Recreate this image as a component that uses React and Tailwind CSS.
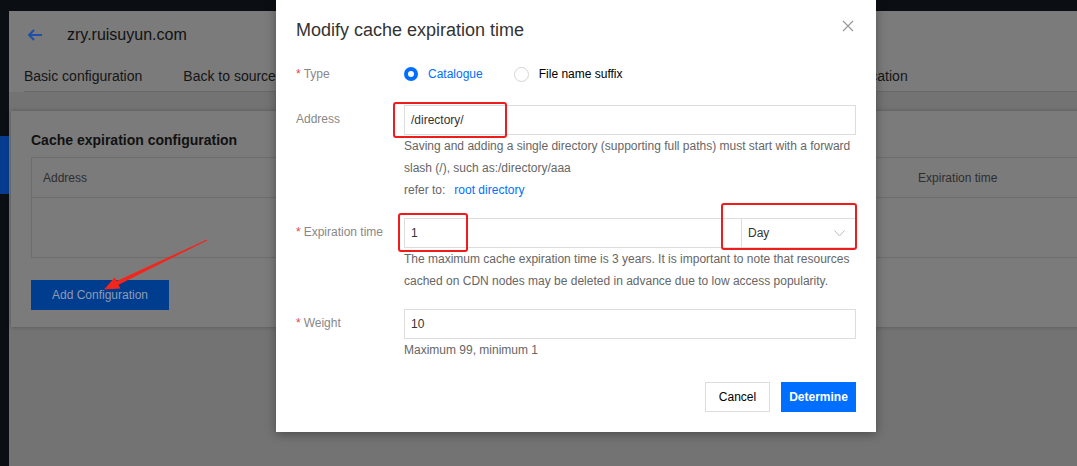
import React from 'react';

const tabs = ['Basic configuration', 'Back to source', 'Cache configuration', 'HTTPS configuration', 'Visit control', 'Access authentication'];

const HelpText = ({ children }) => (
    <div className="text-[12px] leading-[22px] text-[#666]">{children}</div>
);

const Label = ({ required, children }) => (
    <div className="w-[108px] shrink-0 text-[12px] leading-[29px] text-[#888]">
        {required && <span className="text-[#e54545] mr-[3px]">*</span>}
        {children}
    </div>
);

const Radio = ({ checked, label }) => (
    <div className="flex items-center gap-[10px]">
        {checked ? (
            <span className="w-[14px] h-[14px] rounded-full bg-[#006eff] flex items-center justify-center">
                <span className="w-[6px] h-[6px] rounded-full bg-white" />
            </span>
        ) : (
            <span className="w-[15px] h-[15px] rounded-full border border-[#d4d4d4] bg-white" />
        )}
        <span className={`text-[12px] ${checked ? 'text-[#006eff]' : 'text-black'}`}>{label}</span>
    </div>
);

const Background = () => (
    <div className="w-[1077px] h-[466px] bg-[#0b0f14] flex flex-col overflow-hidden">
        <div className="h-[11px] shrink-0" />
        <div className="flex flex-1">
            {/* sidebar edge */}
            <div className="w-[9px] shrink-0">
                <div className="mt-[125px] h-[58px] bg-[#063b8e]" />
            </div>

            <div className="flex-1 bg-[#737373] min-w-0">
                {/* page header */}
                <div className="bg-[#7b7b7b] h-[81px] pl-[15px] flex flex-col">
                    <div className="flex items-center h-[46px] pt-[2px]">
                        <svg width="16" height="12" viewBox="0 0 16 12" className="ml-[3px]" fill="none" stroke="#1f4fa8" strokeWidth="2">
                            <path d="M15 6H2M7 1 2 6l5 5" />
                        </svg>
                        <span className="ml-[24px] text-[16px] text-[#111]">zry.ruisuyun.com</span>
                    </div>
                    <div className="flex gap-[41px] border-b border-[#686868] h-[35px] items-center pt-[5px] whitespace-nowrap">
                        {tabs.map((t, i) => (
                            <span key={t} className={`text-[14px] text-[#151515] ${i === tabs.length - 1 ? 'ml-[5px]' : ''}`}>{t}</span>
                        ))}
                    </div>
                </div>

                {/* card */}
                <div className="mt-[19px] ml-[2px] w-[1120px] h-[216px] bg-[#7b7b7b] shadow-[0_0_4px_rgba(0,0,0,0.25)] pt-[21px] px-[20px]">
                    <div className="text-[14px] font-bold text-[#111] leading-[16px]">Cache expiration configuration</div>
                    <div className="mt-[9px] border border-[#6d6d6d]">
                        <div className="h-[40px] flex items-center border-b border-[#6d6d6d] text-[12px] text-[#2e2e2e]">
                            <span className="ml-[11px]">Address</span>
                            <span className="ml-[831px]">Expiration time</span>
                        </div>
                        <div className="h-[59px]" />
                    </div>
                    <button className="mt-[22px] w-[138px] h-[30px] bg-[#003d8f] text-[12px] text-[#8f9bb1]">
                        Add Configuration
                    </button>
                </div>
            </div>
        </div>
    </div>
);

const Modal = () => (
    <div className="absolute left-[276px] top-0 w-[600px] bg-white shadow-[0_2px_10px_rgba(0,0,0,0.35)] px-[20px] pt-[20px] pb-[20px]">
        <div className="flex items-center justify-between h-[20px]">
            <span className="text-[18px] text-[#333] leading-[20px]">Modify cache expiration time</span>
            <svg width="12" height="12" viewBox="0 0 12 12" className="mr-[2px] -mt-[8px]" stroke="#9a9a9a" strokeWidth="1.2">
                <path d="M1 1l10 10M11 1 1 11" />
            </svg>
        </div>

        {/* type */}
        <div className="mt-[24px] flex items-center h-[20px]">
            <div className="w-[108px] shrink-0 text-[12px] text-[#888]">
                <span className="text-[#e54545] mr-[3px]">*</span>Type
            </div>
            <div className="flex gap-[31px]">
                <Radio checked label="Catalogue" />
                <Radio label="File name suffix" />
            </div>
        </div>

        {/* address */}
        <div className="mt-[21px] flex">
            <Label>Address</Label>
            <div className="flex-1">
                <div className="h-[30px] border border-[#ddd] flex items-center px-[6px] text-[12px] text-[#333]">/directory/</div>
                <HelpText>Saving and adding a single directory (supporting full paths) must start with a forward</HelpText>
                <HelpText>slash (/), such as:/directory/aaa</HelpText>
                <HelpText>
                    refer to:<span className="text-[#006eff] ml-[9px]">root directory</span>
                </HelpText>
            </div>
        </div>

        {/* expiration */}
        <div className="mt-[17px] flex">
            <Label required>Expiration time</Label>
            <div className="flex-1">
                <div className="h-[30px] border border-[#ddd] flex text-[12px] text-[#333]">
                    <div className="flex-1 flex items-center px-[6px]">1</div>
                    <div className="w-[114px] border-l border-[#ddd] flex items-center justify-between pl-[6px] pr-[10px]">
                        <span>Day</span>
                        <svg width="11" height="7" viewBox="0 0 11 7" fill="none" stroke="#bbb" strokeWidth="1">
                            <path d="M0.5 0.5 5.5 6l5-5.5" />
                        </svg>
                    </div>
                </div>
                <HelpText>The maximum cache expiration time is 3 years. It is important to note that resources</HelpText>
                <HelpText>cached on CDN nodes may be deleted in advance due to low access popularity.</HelpText>
            </div>
        </div>

        {/* weight */}
        <div className="mt-[17px] flex">
            <Label required>Weight</Label>
            <div className="flex-1">
                <div className="h-[30px] border border-[#ddd] flex items-center px-[6px] text-[12px] text-[#333]">10</div>
                <HelpText>Maximum 99, minimum 1</HelpText>
            </div>
        </div>

        <div className="mt-[21px] flex justify-end gap-[11px]">
            <button className="w-[65px] h-[30px] border border-[#ddd] bg-white text-[12px] text-black">Cancel</button>
            <button className="w-[75px] h-[30px] bg-[#006eff] text-[12px] text-white font-bold">Determine</button>
        </div>

        {/* screenshot annotations */}
        <div className="absolute left-[117px] top-[102px] w-[114px] h-[36px] border-[2.5px] border-[#f01c1c] rounded-[3px]" />
        <div className="absolute left-[122px] top-[213px] w-[70px] h-[39px] border-[2.5px] border-[#f01c1c] rounded-[3px]" />
        <div className="absolute left-[445px] top-[203px] w-[136px] h-[47px] border-[2.5px] border-[#f01c1c] rounded-[3px]" />
    </div>
);

export default function App() {
    return (
        <div className="relative w-[1077px] h-[466px] overflow-hidden font-['Liberation_Sans',Arial,sans-serif]">
            <Background />
            <Modal />
            {/* red arrow annotation */}
            <svg className="absolute left-0 top-0 pointer-events-none" width="1077" height="466">
                <polygon
                    points="207.2,240.4 118.5,284.7 120.4,288.6 104,289.5 114.8,277.2 116.7,281.1 206.8,239.6"
                    fill="#f2261c"
                />
            </svg>
        </div>
    );
}
